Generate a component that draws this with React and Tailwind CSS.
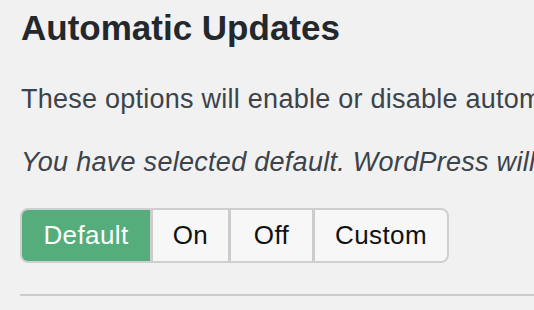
import { useState } from "react";

const options = [
  { id: "default", label: "Default", width: "w-[128px]" },
  { id: "on", label: "On", width: "w-[75px]" },
  { id: "off", label: "Off", width: "w-[81px]" },
  { id: "custom", label: "Custom", width: "w-[132px]" },
];

function App() {
  const [selected, setSelected] = useState("default");

  return (
    <div className="min-h-screen w-full overflow-hidden bg-[#f1f1f1] font-['Liberation_Sans',Arial,sans-serif] pt-2">
      <div className="pl-[21px] whitespace-nowrap">
        <h2 className="text-[35px] leading-[40px] font-bold text-[#23282d]">Automatic Updates</h2>
        <p className="mt-[35px] text-[27px] leading-[32px] tracking-[0.25px] text-[#3c434a]">
          These options will enable or disable automatic updates for your site.
        </p>
        <p className="mt-[31px] text-[27px] leading-[32px] tracking-[0.28px] italic text-[#3c434a]">
          You have selected default. WordPress will only install minor updates automatically.
        </p>
      </div>
      <div className="pl-5 mt-[30px]">
        <div className="inline-flex h-[55px] border-2 border-[#cfcfcf] rounded-[8px] overflow-hidden bg-[#cccccc] gap-[3px]">
          {options.map((opt) => (
            <button
              key={opt.id}
              onClick={() => setSelected(opt.id)}
              className={
                opt.width +
                " flex items-center justify-center text-[26px] tracking-[0.4px] " +
                (selected === opt.id ? "bg-[#55ad7b] text-white" : "bg-[#f7f7f7] text-[#111111]")
              }
            >
              {opt.label}
            </button>
          ))}
        </div>
      </div>
      <hr className="mt-[31px] ml-5 border-0 h-[2px] bg-[#cccccc]" />
    </div>
  );
}

export default App;
